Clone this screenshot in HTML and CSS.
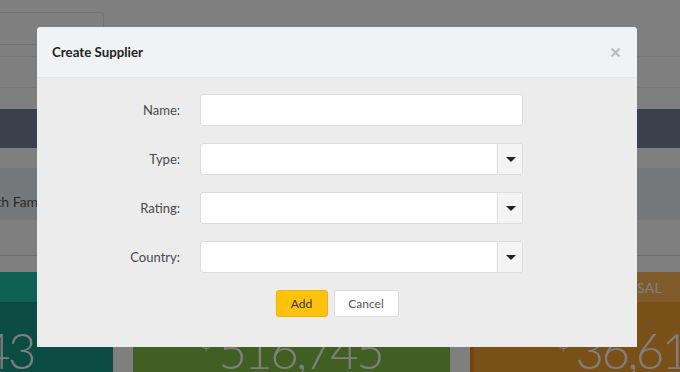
FILE: index.html
```html
<!DOCTYPE html>
<html>
<head>
<meta charset="utf-8">
<link rel="stylesheet" href="styles.css">
</head>
<body>
<div class="page">
  <div class="toolbar"><div class="search"></div></div>
  <div class="filters"></div>
  <div class="table">
    <div class="thead"></div>
    <div class="row row-short"></div>
    <div class="row row-hl"><span class="cell">Smith Family</span></div>
    <div class="row row-last"></div>
  </div>
  <div class="tiles">
    <div class="tile tile-teal"><div class="tile-head"></div><div class="tile-body tile-body-right"><span class="num">43</span></div></div>
    <div class="tile tile-green"><div class="tile-head">REVENUE</div><div class="tile-body"><span class="cur">$</span><span class="num">516,745</span></div></div>
    <div class="tile tile-orange"><div class="tile-head">PROPOSAL</div><div class="tile-body tile-body-left"><span class="cur">$</span><span class="num">36,613</span></div></div>
  </div>
  <div class="backdrop"></div>
  <div class="modal">
    <div class="modal-header">
      <span class="modal-title">Create Supplier</span>
      <svg class="close" width="11" height="11" viewBox="0 0 11 11"><path d="M1.5 1.5 L9.5 9.5 M9.5 1.5 L1.5 9.5" stroke="#bdbdbd" stroke-width="2.2" fill="none"/></svg>
    </div>
    <div class="modal-body">
      <div class="form">
        <label class="lbl">Name:</label>
        <div class="input"></div>
        <label class="lbl">Type:</label>
        <div class="select"><div class="select-field"></div><div class="select-btn"><span class="caret"></span></div></div>
        <label class="lbl">Rating:</label>
        <div class="select"><div class="select-field"></div><div class="select-btn"><span class="caret"></span></div></div>
        <label class="lbl">Country:</label>
        <div class="select"><div class="select-field"></div><div class="select-btn"><span class="caret"></span></div></div>
      </div>
      <div class="actions">
        <button class="btn btn-add">Add</button>
        <button class="btn btn-cancel">Cancel</button>
      </div>
    </div>
  </div>
</div>
</body>
</html>
```
FILE: styles.css
```css
* { box-sizing: border-box; }
html, body { margin: 0; padding: 0; }
body { font-family: Lato, "Noto Sans", "Liberation Sans", sans-serif; }

.page {
  position: relative;
  width: 680px;
  height: 372px;
  overflow: hidden;
  background: #ffffff;
}

.toolbar {
  height: 57px;
  padding-top: 12px;
  border-bottom: 1px solid #eeeeee;
}
.search {
  width: 104px;
  height: 33px;
  border: 1px solid #e6e6e6;
  border-left: none;
  border-radius: 0 4px 4px 0;
}
.filters {
  height: 31px;
  border-bottom: 1px solid #eeeeee;
}

.table { margin-top: 21px; }
.thead { height: 39px; background: #778398; }
.row { border-bottom: 1px solid #f2f2f2; }
.row-short { height: 20px; border-bottom: none; }
.row-hl {
  height: 52px;
  background: #eaf0f6;
  display: flex;
  align-items: center;
  padding-top: 16px;
  font-size: 14px;
  color: #555;
}
.cell { margin-left: -26px; white-space: nowrap; }
.row-last { height: 36px; border-bottom: 1px solid #dddddd; }

.tiles {
  margin-top: 16px;
  display: flex;
  gap: 20px;
}
.tile { flex: none; height: 110px; overflow: hidden; }
.tile-head {
  height: 30px;
  font-size: 14px;
  color: #ffffff;
  display: flex;
  align-items: center;
  justify-content: flex-end;
  padding-right: 48px;
  letter-spacing: 0.3px;
  white-space: nowrap;
}
.tile-body {
  height: 80px;
  display: flex;
  justify-content: center;
  align-items: flex-start;
  padding-top: 18px;
  font-weight: 300;
  color: #ffffff;
  white-space: nowrap;
}
.tile-body-right { justify-content: flex-end; padding-right: 79px; }
.tile-body-left { justify-content: flex-start; padding-left: 84px; }
.num { font-size: 49px; line-height: 60px; letter-spacing: -2.5px; }
.cur { font-size: 20px; line-height: 30px; margin-right: 6px; margin-top: 6px; }

.tile-teal { width: 113px; }
.tile-teal .tile-head { background: #1ec4a4; }
.tile-teal .tile-body { background: #179a84; }
.tile-green { width: 317px; background: #84be46; }
.tile-green .tile-head { background: #84be46; }
.tile-orange { width: 240px; background: #f4a032; border-left: 4px solid #e88a10; }
.tile-orange .tile-head { background: #feb454; }

.backdrop {
  position: absolute;
  inset: 0;
  background: rgba(0, 0, 0, 0.5);
}

.modal {
  position: absolute;
  left: 37px;
  top: 27px;
  width: 600px;
  border-radius: 4px 4px 0 0;
  overflow: hidden;
  background: #ececec;
}
.modal-header {
  height: 51px;
  background: #f1f2f4;
  border-bottom: 1px solid #e3e4e6;
  display: flex;
  align-items: center;
  justify-content: space-between;
  padding: 0 16px 0 15px;
}
.modal-title {
  font-size: 13.3px;
  font-weight: 700;
  color: #222;
}
.close { display: block; margin-top: 1px; }

.modal-body { padding: 16px 0 30px; }
.form {
  display: grid;
  grid-template-columns: 143px 323px;
  column-gap: 20px;
  row-gap: 17px;
  align-items: center;
}
.lbl {
  text-align: right;
  font-size: 13px;
  color: #4a4a4a;
}
.input, .select {
  height: 32px;
  background: #fff;
  border: 1px solid #dcdcdc;
  border-radius: 3px;
}
.select { display: flex; overflow: hidden; }
.select-field { flex: 1; }
.select-btn {
  width: 25px;
  background: #f4f4f4;
  border-left: 1px solid #dcdcdc;
  display: flex;
  align-items: center;
  justify-content: center;
}
.caret {
  width: 0;
  height: 0;
  border-left: 5px solid transparent;
  border-right: 5px solid transparent;
  border-top: 5px solid #222;
  margin-left: 1px;
}

.actions {
  margin-top: 17px;
  display: flex;
  justify-content: center;
  gap: 6px;
}
.btn {
  height: 27px;
  border-radius: 3px;
  font-family: Lato, "Noto Sans", sans-serif;
  font-size: 12px;
  padding: 0;
}
.btn-add {
  width: 52px;
  background: #fec20d;
  border: 1px solid #f0b400;
  color: #333;
}
.btn-cancel {
  width: 65px;
  background: #fff;
  border: 1px solid #dddddd;
  color: #555;
}
```
